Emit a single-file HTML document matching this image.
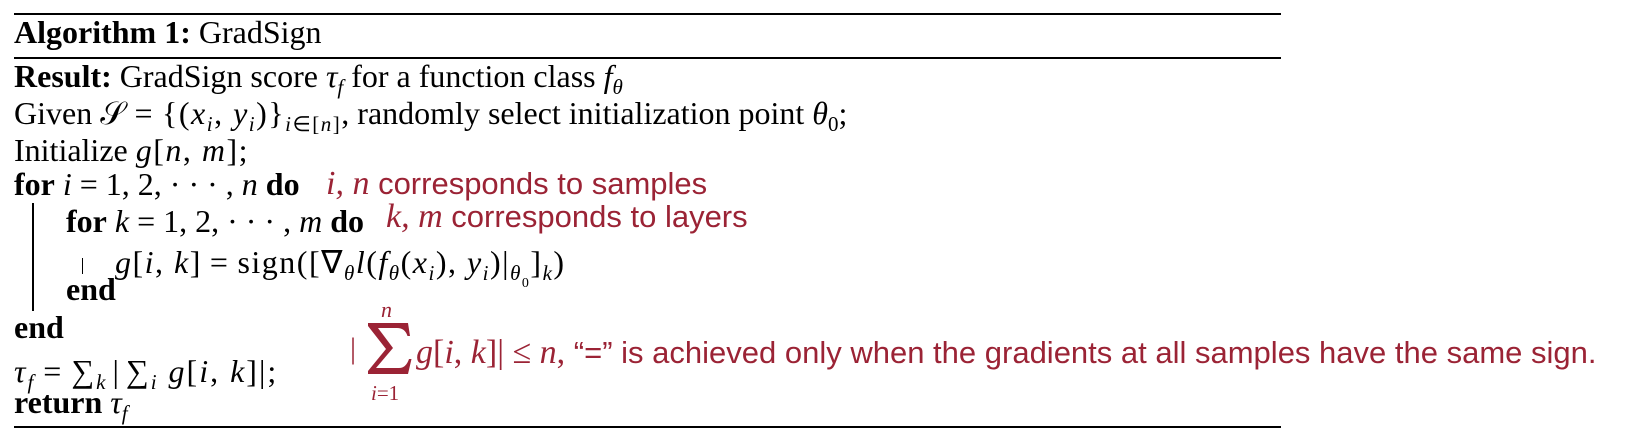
<!DOCTYPE html>
<html><head><meta charset="utf-8"><style>
body{margin:0;width:1636px;height:444px;background:#fff;position:relative;overflow:hidden;font-family:"Liberation Serif",serif;color:#000}
.l{position:absolute;white-space:nowrap;font-size:32px;line-height:1}
.r{position:absolute;white-space:nowrap;color:#9b2335;font-family:"Liberation Sans",sans-serif;font-size:31px;line-height:1}
.rule{position:absolute;left:14px;width:1267px;background:#000}
i{font-style:italic}
.ri{font-family:"Liberation Serif",serif;font-style:italic;font-size:34px}
sub{font-size:21px;vertical-align:-7px;line-height:0}
.vb{position:absolute;width:1.5px;background:#000}
.s{margin:0 8px}
.m{letter-spacing:1.5px}
</style></head><body>
<div class="rule" style="top:13px;height:2px"></div>
<div class="rule" style="top:57px;height:2px"></div>
<div class="rule" style="top:426px;height:2px"></div>

<div class="l" style="left:14px;top:16px"><b>Algorithm 1:</b> GradSign</div>
<div class="l" style="left:14px;top:60px"><b>Result:</b> GradSign score <i>τ<sub>f</sub></i> for a function class <i>f<sub>θ</sub></i></div>
<div class="l" style="left:14px;top:97px">Given <span class="m">𝒮<span class="s">=</span>{(<i>x<sub>i</sub></i>, <i>y<sub>i</sub></i>)}<sub><i>i</i>∈[<i>n</i>]</sub></span>, randomly select initialization point <i>θ</i><sub>0</sub>;</div>
<div class="l" style="left:14px;top:134px">Initialize <span class="m"><i>g</i>[<i>n</i>, <i>m</i>]</span>;</div>
<div class="l" style="left:14px;top:168px"><b>for</b> <i>i</i><span class="s">=</span>1, 2, · · · , <i>n</i> <b>do</b></div>
<div class="vb" style="left:32px;top:203px;height:108px"></div>
<div class="l" style="left:66px;top:205px"><b>for</b> <i>k</i><span class="s">=</span>1, 2, · · · , <i>m</i> <b>do</b></div>
<div class="vb" style="left:82px;top:258px;height:16px;width:1px"></div>
<div class="l m" style="left:115px;top:246px"><i>g</i>[<i>i</i>, <i>k</i>]<span class="s">=</span>sign([∇<sub><i>θ</i></sub><i>l</i>(<i>f<sub>θ</sub></i>(<i>x<sub>i</sub></i>), <i>y<sub>i</sub></i>)|<sub><i>θ</i><sub style="font-size:14px">0</sub></sub>]<sub><i>k</i></sub>)</div>
<div class="l" style="left:66px;top:273px"><b>end</b></div>
<div class="l" style="left:14px;top:311px"><b>end</b></div>
<div class="l" style="left:14px;top:355px;letter-spacing:2px"><i>τ<sub>f</sub></i><span class="s">=</span>∑<sub><i>k</i></sub><span style="margin:0 5px">|</span>∑<sub><i>i</i></sub> <i>g</i>[<i>i</i>, <i>k</i>]|;</div>
<div class="l" style="left:14px;top:386px"><b>return</b> <i>τ<sub>f</sub></i></div>

<div class="r" style="left:326px;top:167px"><span class="ri">i, n</span> corresponds to samples</div>
<div class="r" style="left:386px;top:200px"><span class="ri">k, m</span> corresponds to layers</div>

<div class="r" style="left:381px;top:299px;font-family:'Liberation Serif',serif;font-style:italic;font-size:22px">n</div>
<div class="r" style="left:350px;top:334px;font-family:'Liberation Serif',serif;font-size:30px">|</div>
<svg style="position:absolute;left:368px;top:323px" width="44" height="51" viewBox="0 0 44 51"><path fill="#9b2335" d="M0,0 H40 L42,13 H39.5 Q37,5 29,5 H10 L25,25 L8,45 H31 Q38,45 41,36 H43.5 L40,51 H0 V48 L18,26 L0,3 Z"/></svg>
<div class="r" style="left:371px;top:383px;font-family:'Liberation Serif',serif;font-size:21px"><i>i</i>=1</div>
<div class="r" style="left:416px;top:336px"><span class="ri">g</span><span style="font-family:'Liberation Serif',serif;font-size:34px">[<i>i</i>, <i>k</i>]| ≤ <i>n</i>,</span> “=” is achieved only when the gradients at all samples have the same sign.</div>
</body></html>
